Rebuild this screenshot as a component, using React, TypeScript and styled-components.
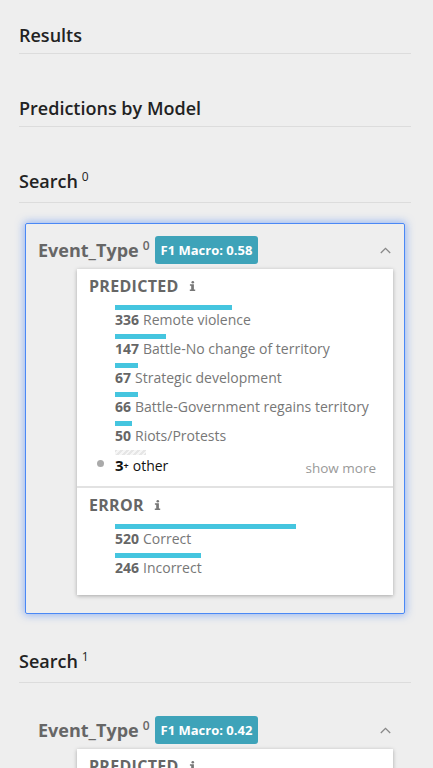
import React from "react";
import styled, { createGlobalStyle } from "styled-components";

const GlobalStyle = createGlobalStyle`
  html, body { margin: 0; padding: 0; background: #eeeeee; }
  body { font-family: "Open Sans", "Noto Sans", sans-serif; color: #222; }
  * { box-sizing: border-box; }
`;

const Page = styled.div`
  padding: 0 22px 40px 19px;
`;

const SectionHeader = styled.h2<{ $first?: boolean; $top?: number }>`
  margin: ${(p) => (p.$first ? 21 : p.$top ?? 40)}px 0 0 0;
  padding: 2px 0 6px 0;
  font-size: 18px;
  line-height: 24px;
  font-weight: 600;
  color: #222;
  border-bottom: 1px solid #dcdcdc;
  sup { font-size: 12px; font-weight: 400; vertical-align: 0; position: relative; top: -7px; margin-left: 4px; }
`;

const Card = styled.div<{ $active?: boolean }>`
  margin: 20px 6px 0 6px;
  padding: 12px 12px 18px 12px;
  border: 1px solid ${(p) => (p.$active ? "#4a88f5" : "transparent")};
  border-radius: 2px;
  box-shadow: ${(p) => (p.$active ? "0 0 8px 1px rgba(70,130,245,0.55)" : "none")};
`;

const CardHead = styled.div`
  display: flex;
  align-items: center;
  height: 28px;
`;

const FieldName = styled.span`
  font-size: 18px;
  font-weight: 700;
  color: #666;
  sup { font-size: 12px; font-weight: 600; position: relative; top: -7px; vertical-align: 0; margin-left: 4px; }
`;

const Badge = styled.span`
  margin-left: 5px;
  height: 28px;
  padding: 0 6px;
  display: inline-flex;
  align-items: center;
  background: #3ea3b9;
  color: #fff;
  border-radius: 3px;
  font-size: 13px;
  font-weight: 700;
`;

const Chevron = styled.svg`
  margin-left: auto;
  margin-right: 1px;
`;

const Panel = styled.div`
  margin: 5px -1px 0 39px;
  background: #fff;
  box-shadow: 0 1px 4px rgba(0, 0, 0, 0.3);
`;

const Section = styled.div<{ $divider?: boolean }>`
  padding: 6px 17px ${(p) => (p.$divider ? 13 : 7)}px 12px;
  border-top: ${(p) => (p.$divider ? "2px solid #e2e2e2" : "none")};
`;

const SectionTitle = styled.div`
  display: flex;
  align-items: center;
  gap: 10px;
  height: 22px;
  margin-bottom: 8px;
  font-size: 16px;
  font-weight: 700;
  color: #666;
  letter-spacing: 0.3px;
`;

const Row = styled.div`
  display: flex;
  margin-bottom: 4px;
`;

const Gutter = styled.div`
  width: 26px;
  flex: none;
  display: flex;
  align-items: flex-end;
  padding-bottom: 8px;
  padding-left: 8px;
`;

const Dot = styled.span`
  width: 7px;
  height: 7px;
  border-radius: 50%;
  background: #aaa;
`;

const RowBody = styled.div`
  flex: 1;
  display: flex;
  flex-direction: column;
`;

const Bar = styled.div<{ $hatched?: boolean }>`
  height: 5px;
  background: ${(p) =>
    p.$hatched
      ? "repeating-linear-gradient(135deg, #e6e6e6 0 2px, #f6f6f6 2px 4px)"
      : "#45c5df"};
`;

const Label = styled.div`
  display: flex;
  align-items: baseline;
  height: 20px;
  line-height: 20px;
  font-size: 14px;
  color: #777;
  b { color: #666; font-weight: 700; margin-right: 4px; }
`;

const OtherLabel = styled(Label)`
  color: #111;
  b { color: #111; margin-right: 4px; font-size: 15px; }
  b small { font-size: 9px; vertical-align: 2px; }
`;

const ShowMore = styled.span`
  margin-left: auto;
  font-size: 13.5px;
  color: #999;
  position: relative;
  top: 2px;
`;

const InfoIcon = () => (
  <svg width="7" height="10" viewBox="0 0 7 10">
    <circle cx="3.8" cy="1.3" r="1.3" fill="#777" />
    <path d="M0.9 3.3 H4.9 V8.6 H6.2 V10 H0.8 V8.6 H2.2 V4.7 H0.9 Z" fill="#777" />
  </svg>
);

const ChevronUp = () => (
  <Chevron width="11" height="7" viewBox="0 0 11 7">
    <polyline points="0.8,6 5.5,1.3 10.2,6" fill="none" stroke="#888" strokeWidth="1.3" />
  </Chevron>
);

type Item = { n: number; l: string };
const SCALE = 0.3485;
const predicted: Item[] = [
  { n: 336, l: "Remote violence" },
  { n: 147, l: "Battle-No change of territory" },
  { n: 67, l: "Strategic development" },
  { n: 66, l: "Battle-Government regains territory" },
  { n: 50, l: "Riots/Protests" },
];
const errors: Item[] = [
  { n: 520, l: "Correct" },
  { n: 246, l: "Incorrect" },
];

const ItemRow = ({ item }: { item: Item }) => (
  <Row>
    <Gutter />
    <RowBody>
      <Bar style={{ width: Math.round(item.n * SCALE) }} />
      <Label>
        <b>{item.n}</b>
        {item.l}
      </Label>
    </RowBody>
  </Row>
);

const FieldCard = ({ score, active }: { score: string; active?: boolean }) => (
  <Card $active={active}>
    <CardHead>
      <FieldName>
        Event_Type<sup>0</sup>
      </FieldName>
      <Badge>F1 Macro: {score}</Badge>
      <ChevronUp />
    </CardHead>
    <Panel>
      <Section>
        <SectionTitle>
          PREDICTED <InfoIcon />
        </SectionTitle>
        {predicted.map((it) => (
          <ItemRow key={it.l} item={it} />
        ))}
        <Row>
          <Gutter>
            <Dot />
          </Gutter>
          <RowBody>
            <Bar $hatched style={{ width: 31 }} />
            <OtherLabel>
              <b>
                3<small>+</small>
              </b>
              other
              <ShowMore>show more</ShowMore>
            </OtherLabel>
          </RowBody>
        </Row>
      </Section>
      <Section $divider>
        <SectionTitle>
          ERROR <InfoIcon />
        </SectionTitle>
        {errors.map((it) => (
          <ItemRow key={it.l} item={it} />
        ))}
      </Section>
    </Panel>
  </Card>
);

export default function App() {
  return (
    <>
      <GlobalStyle />
      <Page>
        <SectionHeader $first>Results</SectionHeader>
        <SectionHeader>Predictions by Model</SectionHeader>
        <SectionHeader>
          Search<sup>0</sup>
        </SectionHeader>
        <FieldCard score="0.58" active />
        <SectionHeader $top={33}>
          Search<sup>1</sup>
        </SectionHeader>
        <FieldCard score="0.42" />
      </Page>
    </>
  );
}
